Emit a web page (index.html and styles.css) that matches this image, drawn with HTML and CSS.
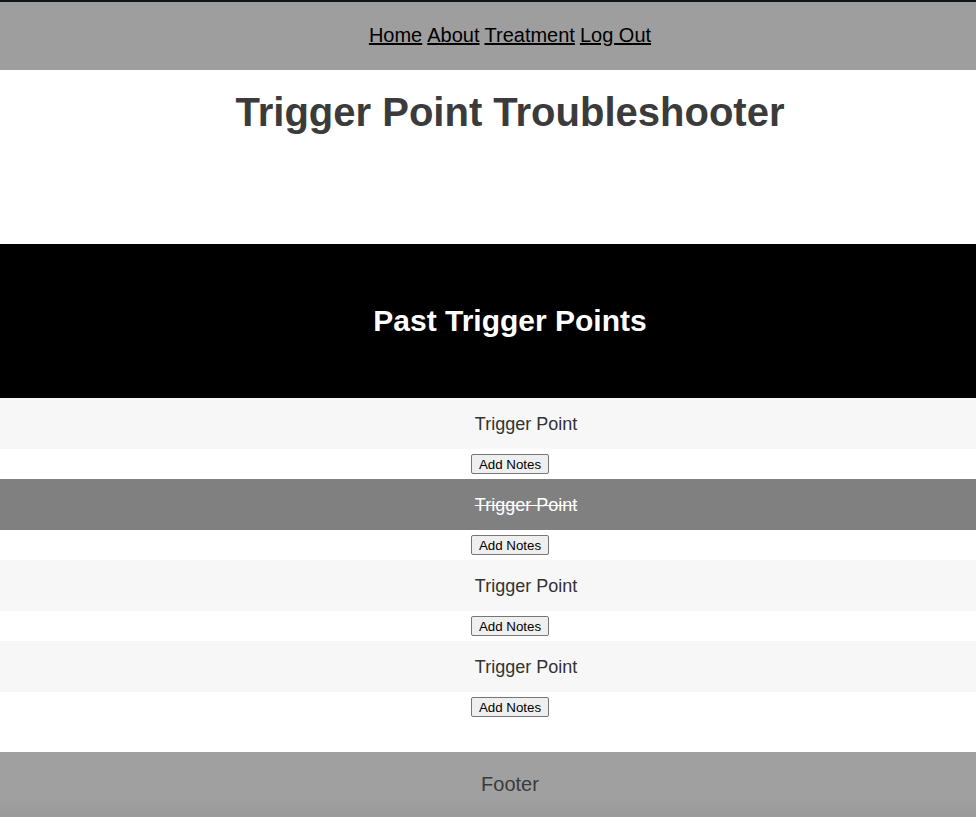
FILE: index.html
```html
<!DOCTYPE html>
<html>
<head>
<meta charset="utf-8">
<title>Trigger Point Troubleshooter</title>
<link rel="stylesheet" href="styles.css">
</head>
<body>
<div class="topline"></div>
<nav class="nav">
  <a href="#">Home</a> <a href="#">About</a> <a href="#">Treatment</a> <a href="#">Log Out</a>
</nav>
<header class="header">
  <h1 class="title">Trigger Point Troubleshooter</h1>
</header>
<section class="past">
  <h2 class="past-title">Past Trigger Points</h2>
</section>
<ul class="list">
  <li class="item">
    <div class="point">Trigger Point</div>
    <div class="actions"><button class="btn">Add Notes</button></div>
  </li>
  <li class="item done">
    <div class="point">Trigger Point</div>
    <div class="actions"><button class="btn">Add Notes</button></div>
  </li>
  <li class="item">
    <div class="point">Trigger Point</div>
    <div class="actions"><button class="btn">Add Notes</button></div>
  </li>
  <li class="item">
    <div class="point">Trigger Point</div>
    <div class="actions"><button class="btn">Add Notes</button></div>
  </li>
</ul>
<footer class="footer">Footer</footer>
</body>
</html>
```
FILE: styles.css
```css
html, body {
  margin: 0;
  padding: 0;
  background: #ffffff;
  font-family: "Liberation Sans", Arial, Helvetica, sans-serif;
}
.topline {
  height: 2px;
  background: #111418;
}
.nav {
  height: 68px;
  background: #9e9e9e;
  display: flex;
  justify-content: center;
  align-items: center;
  gap: 5px;
  padding-left: 44px;
  padding-bottom: 2px;
  box-sizing: border-box;
  font-size: 20px;
}
.nav a {
  color: #000;
  text-decoration: underline;
}
.header {
  height: 174px;
  padding-left: 44px;
  text-align: center;
}
.title {
  margin: 0;
  padding-top: 18px;
  font-size: 40px;
  font-weight: bold;
  color: #3b3b3b;
  line-height: 48px;
}
.past {
  height: 154px;
  background: #000;
  display: flex;
  align-items: center;
  justify-content: center;
  padding-left: 44px;
}
.past-title {
  margin: 0;
  color: #fff;
  font-size: 30px;
  font-weight: bold;
}
.list {
  list-style: none;
  margin: 0;
  padding: 0 0 30px 0;
}
.point {
  height: 51px;
  background: #f7f7f7;
  color: #333;
  font-size: 18px;
  display: flex;
  align-items: center;
  justify-content: center;
  padding-left: 76px;
  padding-top: 2px;
  box-sizing: border-box;
}
.done .point {
  background: #808080;
  color: #fff;
  text-decoration: line-through;
}
.actions {
  height: 30px;
  display: flex;
  align-items: center;
  justify-content: center;
  padding-left: 44px;
}
.btn {
  font-family: "Liberation Sans", Arial, sans-serif;
  font-size: 13.33px;
  height: 20px;
  padding: 0 7px;
  background: #efefef;
  border: 1px solid #767676;
  border-radius: 2px;
  color: #000;
}
.footer {
  height: 65px;
  background: linear-gradient(#a0a0a0 0%, #a0a0a0 70%, #9a9a9a 100%);
  display: flex;
  align-items: center;
  justify-content: center;
  padding-left: 44px;
  font-size: 20px;
  color: #3a3a3a;
}
```
